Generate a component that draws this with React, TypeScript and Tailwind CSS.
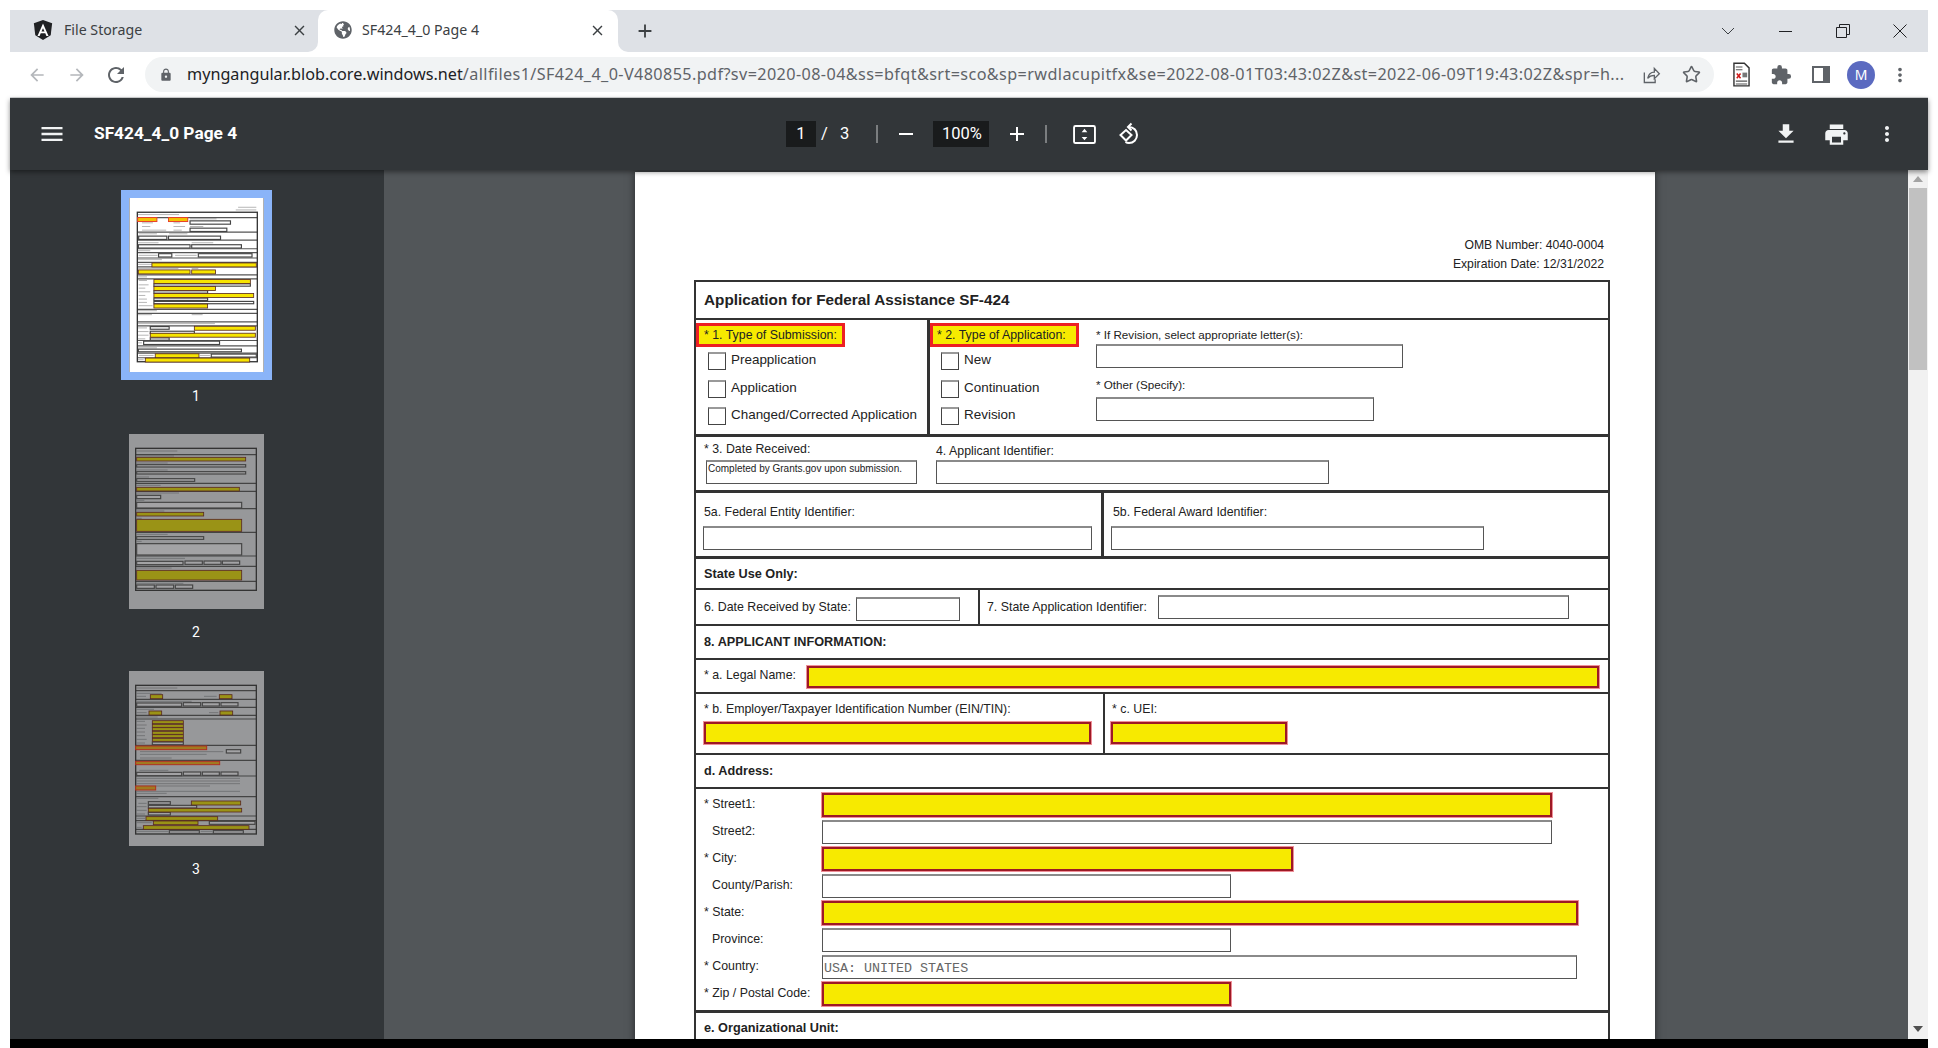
import { MdArrowBack, MdArrowForward, MdExtension, MdFileDownload, MdLock, MdMenu, MdMoreVert, MdPrint, MdRefresh, MdClose, MdAdd, MdRemove } from "react-icons/md";
import { FaGlobeAmericas } from "react-icons/fa";
import { Star } from "lucide-react";

const inputBox = "border border-[#555] border-t-2 border-t-[#8a8a8a] bg-white shrink-0";
const yellowBox = "border-2 border-[#9c1a26] bg-[#f7ea00] shadow-[0_0_0_1px_#ee8f98] shrink-0";

type Bar = [number, number, number, number];
type Label = [number, number, number];

function Thumb({ y, bg, yellow, lines, frame, gray, bars, reds, labels, active }: { y: number; bg: string; yellow: string; lines: number[]; frame: number[]; gray: Bar[]; bars: Bar[]; reds?: Bar[]; labels: Label[]; active?: boolean }) {
  return (
    <svg viewBox={`87 ${y} 405 525`} className="w-full h-full block">
      <rect x="87" y={y} width="405" height="525" fill={bg} />
      {labels.map((t, i) => (
        <line key={i} x1={t[0]} x2={t[1]} y1={t[2]} y2={t[2]} stroke={active ? "#b5b5b5" : "#747577"} strokeWidth="3" />
      ))}
      {lines.map((l) => (
        <line key={l} x1={frame[0]} x2={frame[2]} y1={l} y2={l} stroke={active ? "#555" : "#444"} strokeWidth="3.5" />
      ))}
      <rect x={frame[0]} y={frame[1]} width={frame[2] - frame[0]} height={frame[3] - frame[1]} fill="none" stroke="#333" strokeWidth="4" />
      {gray.map((b, i) => (
        <rect key={i} x={b[0]} y={b[2]} width={b[1] - b[0]} height={b[3]} fill={active ? "#fff" : "#a3a3a5"} stroke="#444" strokeWidth="3.5" />
      ))}
      {bars.map((b, i) => (
        <rect key={i} x={b[0]} y={b[2] - 1} width={b[1] - b[0]} height={b[3] + 3} fill={yellow} stroke="#5a2a22" strokeWidth="2.5" />
      ))}
      {(reds || []).map((b, i) => (
        <rect key={i} x={b[0]} y={b[2] - 1} width={b[1] - b[0]} height={b[3] + 2} fill={active ? "#f2c400" : "#a07a20"} stroke={active ? "#e8402a" : "#b03020"} strokeWidth="3" />
      ))}
    </svg>
  );
}

function Sidebar() {
  return (
    <div className="w-[374px] shrink-0 bg-[#323639] flex flex-col items-center">
      <div className="mt-[20px] ml-[-2px] w-[151px] h-[190px] border-[8px] border-[#8ab4f8]">
        <Thumb
          y={84}
          active
          bg="#fff"
          yellow="#f7e400"
          frame={[111, 127, 473, 578]}
          lines={[143, 187, 211, 237, 249, 265, 278, 292, 316, 328, 420, 432, 458, 470, 514, 530, 552, 566]}
          labels={[[415, 470, 112], [408, 470, 120], [113, 237, 134], [270, 350, 147], [270, 310, 170], [125, 158, 159], [125, 150, 170], [125, 198, 181], [220, 240, 159], [220, 255, 170], [220, 245, 181], [115, 170, 192], [207, 262, 192], [113, 175, 219], [275, 340, 219], [113, 150, 243], [115, 172, 257], [225, 290, 257], [113, 185, 270], [113, 155, 284], [113, 235, 297], [275, 295, 297], [113, 140, 322], [115, 140, 333], [115, 145, 346], [115, 135, 356], [115, 150, 367], [115, 135, 378], [115, 140, 389], [115, 140, 399], [115, 157, 409], [113, 170, 424], [113, 155, 436], [275, 308, 436], [113, 345, 463], [113, 140, 476], [113, 145, 487], [113, 145, 498], [113, 135, 509], [113, 125, 521], [113, 170, 536], [116, 160, 559], [300, 330, 559], [113, 130, 572]]}
          gray={[[270, 392, 153, 10], [270, 381, 175, 10], [115, 200, 199, 10], [205, 362, 199, 10], [114, 270, 225, 10], [275, 425, 225, 10], [175, 215, 252, 10], [295, 457, 252, 10], [161, 452, 343, 7], [161, 323, 364, 7], [161, 323, 386, 7], [161, 462, 396, 7], [150, 207, 472, 8], [150, 283, 486, 7], [150, 207, 506, 7], [130, 359, 516, 10], [114, 425, 540, 8], [334, 470, 555, 9]]}
          bars={[[155, 470, 281, 9], [114, 270, 302, 9], [275, 347, 302, 9], [161, 452, 331, 9], [161, 347, 352, 9], [161, 462, 373, 9], [161, 323, 405, 9], [283, 467, 472, 9], [150, 467, 493, 9], [165, 297, 555, 9], [135, 450, 568, 9]]}
          reds={[[112, 170, 144, 10], [205, 263, 144, 10]]}
        />
      </div>
      <div className="mt-[2px] ml-[-2px] h-[28px] leading-[28px] text-[14px] text-white font-['Roboto',sans-serif]">1</div>
      <div className="mt-[24px] ml-[-2px] w-[135px] h-[175px]">
        <Thumb
          y={42}
          bg="#97989a"
          yellow="#9a9316"
          frame={[107, 85, 469, 511]}
          lines={[104, 190, 214, 266, 337, 408, 439, 484]}
          labels={[[110, 232, 93], [110, 222, 108], [110, 203, 129], [110, 203, 150], [110, 147, 171], [110, 182, 196], [110, 237, 219], [110, 133, 241], [110, 193, 273], [110, 125, 295], [110, 203, 343], [110, 125, 364], [110, 255, 415], [110, 215, 444], [110, 250, 490]]}
          gray={[[110, 437, 134, 7], [110, 437, 155, 7], [110, 284, 176, 8], [110, 182, 226, 10], [110, 425, 247, 17], [110, 311, 350, 8], [110, 425, 371, 34], [110, 249, 424, 10], [255, 307, 423, 10], [312, 363, 423, 10], [367, 419, 423, 10], [110, 163, 495, 10], [168, 221, 495, 10], [226, 278, 495, 10]]}
          bars={[[110, 437, 113, 8], [110, 418, 203, 8], [110, 311, 278, 8], [110, 425, 299, 33], [110, 425, 452, 26]]}
        />
      </div>
      <div className="mt-[9px] ml-[-2px] h-[28px] leading-[28px] text-[14px] text-white font-['Roboto',sans-serif]">2</div>
      <div className="mt-[25px] ml-[-2px] w-[135px] h-[175px]">
        <Thumb
          y={753}
          bg="#97989a"
          yellow="#9a9316"
          frame={[107, 796, 469, 1242]}
          lines={[812, 838, 862, 886, 897, 976, 1021, 1068, 1130, 1188, 1202, 1228]}
          labels={[[110, 232, 804], [110, 185, 820], [110, 138, 829], [312, 350, 829], [110, 275, 844], [110, 162, 868], [110, 140, 878], [327, 355, 878], [110, 173, 891], [110, 135, 904], [110, 140, 915], [110, 135, 925], [110, 135, 936], [110, 135, 947], [110, 140, 958], [110, 135, 969], [120, 370, 995], [120, 320, 1003], [120, 215, 1014], [118, 205, 1051], [110, 420, 1075], [110, 420, 1083], [110, 420, 1091], [110, 330, 1098], [110, 420, 1114], [110, 200, 1120], [110, 175, 1135], [115, 140, 1150], [110, 140, 1160], [110, 140, 1171], [110, 135, 1182], [110, 135, 1195], [110, 155, 1208], [110, 125, 1222], [110, 205, 1234], [302, 337, 1234]]}
          gray={[[110, 245, 849, 10], [250, 302, 848, 10], [307, 358, 848, 10], [363, 414, 848, 10], [157, 250, 966, 8], [379, 422, 989, 10], [110, 245, 1057, 10], [250, 302, 1056, 10], [307, 358, 1056, 10], [363, 414, 1056, 10], [145, 211, 1145, 8], [145, 290, 1156, 8], [145, 211, 1177, 8], [328, 465, 1204, 9], [208, 298, 1232, 8], [340, 430, 1232, 8]]}
          bars={[[151, 188, 825, 9], [358, 396, 825, 9], [147, 185, 874, 9], [360, 398, 874, 9], [157, 250, 903, 6], [157, 250, 914, 6], [157, 250, 924, 6], [157, 250, 935, 6], [157, 250, 945, 6], [157, 250, 956, 6], [274, 422, 1144, 9], [145, 425, 1166, 8], [138, 353, 1191, 8], [160, 294, 1204, 8], [130, 447, 1218, 8]]}
          reds={[[107, 320, 979, 9], [107, 359, 1025, 8], [107, 167, 1099, 10]]}
        />
      </div>
      <div className="mt-[9px] ml-[-2px] h-[28px] leading-[28px] text-[14px] text-white font-['Roboto',sans-serif]">3</div>
    </div>
  );
}

function Check({ label }: { label: string }) {
  return (
    <div className="flex items-start h-[27.5px]">
      <div className="w-[18px] h-[18px] border border-[#444] border-t-2 border-t-[#999] bg-white shrink-0" />
      <span className="ml-[5px] mt-[-1px] leading-[18px] text-[13.45px] whitespace-nowrap">{label}</span>
    </div>
  );
}

function AddressRow({ label, width, yellow, indent, value }: { label: string; width: string; yellow?: boolean; indent?: boolean; value?: string }) {
  return (
    <div className="flex h-[24px]">
      <span className={"w-[118px] shrink-0 mt-[3px] " + (indent ? "pl-[8px]" : "")}>{label}</span>
      <div className={(yellow ? yellowBox : inputBox) + " h-[24px] " + width}>
        {value && <div className="pl-[1px] pt-[4px] font-['Liberation_Mono',monospace] text-[13.35px] leading-[16px] text-[#666]">{value}</div>}
      </div>
    </div>
  );
}

function PdfForm() {
  return (
    <div className="w-[916px] mt-[6px] border-x-2 border-t-2 border-[#333] text-[12.35px] leading-[16px] text-[#222]">
      <div className="h-[36px] flex items-center pl-[8px] text-[15.3px] font-bold">Application for Federal Assistance SF-424</div>

      <div className="h-[116px] border-t-2 border-[#333] flex">
        <div className="w-[234px] border-r-[3px] border-[#333] shrink-0">
          <div className="w-[149px] h-[24px] mt-[3px] border-[3px] border-[#ed2024] bg-[#f7ea00] pl-[5px] leading-[18px]">* 1. Type of Submission:</div>
          <div className="ml-[12px] mt-[5px]">
            <Check label="Preapplication" />
            <Check label="Application" />
            <Check label="Changed/Corrected Application" />
          </div>
        </div>
        <div className="w-[166px] shrink-0">
          <div className="w-[149px] h-[24px] mt-[3px] border-[3px] border-[#ed2024] bg-[#f7ea00] pl-[4px] leading-[18px]">* 2. Type of Application:</div>
          <div className="ml-[11px] mt-[5px]">
            <Check label="New" />
            <Check label="Continuation" />
            <Check label="Revision" />
          </div>
        </div>
        <div className="flex flex-col">
          <div className="mt-[7px] text-[11.65px]">* If Revision, select appropriate letter(s):</div>
          <div className={inputBox + " w-[307px] h-[24px] mt-[1px]"} />
          <div className="mt-[9px] text-[11.65px]">* Other (Specify):</div>
          <div className={inputBox + " w-[278px] h-[24px] mt-[4px]"} />
        </div>
      </div>

      <div className="h-[56px] border-t-[3px] border-[#333] flex">
        <div className="w-[240px] shrink-0 pl-[8px] pt-[4px]">
          <div>* 3. Date Received:</div>
          <div className={inputBox + " w-[211px] h-[24px] ml-[2px] mt-[3px] pl-[1px] text-[10px] leading-[14px]"}>Completed by Grants.gov upon submission.</div>
        </div>
        <div className="pt-[6px]">
          <div>4. Applicant Identifier:</div>
          <div className={inputBox + " w-[393px] h-[24px] mt-[1px]"} />
        </div>
      </div>

      <div className="h-[66px] border-t-[3px] border-[#333] flex">
        <div className="w-[408px] shrink-0 border-r-[3px] border-[#333] pl-[7px] pt-[11px]">
          <div className="pl-[1px]">5a. Federal Entity Identifier:</div>
          <div className={inputBox + " w-[389px] h-[24px] mt-[6px]"} />
        </div>
        <div className="pl-[7px] pt-[11px]">
          <div className="pl-[2px]">5b. Federal Award Identifier:</div>
          <div className={inputBox + " w-[373px] h-[24px] mt-[6px]"} />
        </div>
      </div>

      <div className="h-[32px] border-t-[3px] border-[#333] flex items-center pl-[8px] font-bold text-[12.7px]">State Use Only:</div>

      <div className="h-[36px] border-t-2 border-[#333] flex">
        <div className="w-[284px] shrink-0 border-r-2 border-[#333] pl-[8px] flex items-start">
          <span className="mt-[9px]">6. Date Received by State:</span>
          <div className={inputBox + " w-[104px] h-[24px] mt-[7px] ml-[5px]"} />
        </div>
        <div className="pl-[7px] flex items-start">
          <span className="mt-[9px]">7. State Application Identifier:</span>
          <div className={inputBox + " w-[411px] h-[24px] mt-[5px] ml-[11px]"} />
        </div>
      </div>

      <div className="h-[34px] border-t-2 border-[#333] flex items-center pl-[8px] font-bold text-[12.7px]">8. APPLICANT INFORMATION:</div>

      <div className="h-[34px] border-t-2 border-[#333] flex pl-[8px]">
        <span className="mt-[7px] w-[103px] shrink-0">* a. Legal Name:</span>
        <div className={yellowBox + " w-[792px] h-[22px] mt-[6px]"} />
      </div>

      <div className="h-[61px] border-t-2 border-[#333] flex">
        <div className="w-[409px] shrink-0 border-r-2 border-[#333] pl-[8px] pt-[7px]">
          <div>* b. Employer/Taxpayer Identification Number (EIN/TIN):</div>
          <div className={yellowBox + " w-[387px] h-[22px] mt-[5px]"} />
        </div>
        <div className="pl-[6px] pt-[7px]">
          <div className="pl-[1px]">* c. UEI:</div>
          <div className={yellowBox + " w-[176px] h-[22px] mt-[5px]"} />
        </div>
      </div>

      <div className="h-[34px] border-t-2 border-[#333] flex items-center pl-[8px] font-bold text-[12.7px]">d. Address:</div>

      <div className="h-[223px] border-t-2 border-[#333] pl-[8px] pt-[4px] flex flex-col gap-[3px]">
        <AddressRow label="* Street1:" width="w-[730px]" yellow />
        <AddressRow label="Street2:" indent width="w-[730px]" />
        <AddressRow label="* City:" width="w-[471px]" yellow />
        <AddressRow label="County/Parish:" indent width="w-[409px]" />
        <AddressRow label="* State:" width="w-[756px]" yellow />
        <AddressRow label="Province:" indent width="w-[409px]" />
        <AddressRow label="* Country:" width="w-[755px]" value="USA: UNITED STATES" />
        <AddressRow label="* Zip / Postal Code:" width="w-[409px]" yellow />
      </div>

      <div className="h-[34px] border-t-[3px] border-[#333] flex items-center pl-[8px] pb-[2px] font-bold text-[12.7px]">e. Organizational Unit:</div>
    </div>
  );
}

export default function App() {
  return (
    <div className="w-[1938px] h-[1048px] overflow-hidden bg-white px-[10px] pt-[10px] flex flex-col font-['Liberation_Sans',Arial,sans-serif]">
      {/* tabs */}
      <div className="h-[42px] flex shrink-0 font-['Noto_Sans',sans-serif] text-[14.2px] text-[#3c4043]">
        <div className="w-[308px] bg-[#dee1e6] rounded-br-[10px] flex items-center pl-[22px] pr-[10px] pb-[2px]">
          <svg viewBox="0 0 24 24" className="w-[22px] h-[22px] shrink-0">
            <path d="M12 1 2 4.6l1.6 13L12 23l8.4-5.4 1.6-13z" fill="#202124" />
            <path d="M12 5 6 18.5h2.3l1.2-3h5l1.2 3H18zM12 10l1.7 3.7h-3.4z" fill="#fff" fillRule="evenodd" />
          </svg>
          <span className="ml-[10px] flex-1">File Storage</span>
          <MdClose className="w-[17px] h-[17px] text-[#3c4043]" />
        </div>
        <div className="w-[300px] bg-[#dee1e6]">
          <div className="h-full bg-white rounded-t-[10px] flex items-center pl-[16px] pr-[12px] pb-[2px]">
            <FaGlobeAmericas className="w-[18px] h-[18px] text-[#5f6368] shrink-0" />
            <span className="ml-[10px] flex-1">SF424_4_0 Page 4</span>
            <MdClose className="w-[17px] h-[17px] text-[#3c4043]" />
          </div>
        </div>
        <div className="flex-1 bg-[#dee1e6] rounded-bl-[10px] flex items-center pl-[16px] text-[#3c4043]">
          <MdAdd className="w-[22px] h-[22px]" />
          <div className="flex-1" />
          <svg viewBox="0 0 14 8" className="w-[14px] h-[8px] mr-[44px]"><path d="M1 1l6 6 6-6" fill="none" stroke="#3c4043" strokeWidth="1" /></svg>
          <div className="w-[13px] h-[1px] bg-[#202124] mr-[44px]" />
          <svg viewBox="0 0 14 14" className="w-[14px] h-[14px] mr-[43px]"><path d="M.5 3.5h10v10H.5zM3.5 3.5v-3h10v10h-3" fill="none" stroke="#202124" /></svg>
          <svg viewBox="0 0 14 14" className="w-[14px] h-[14px] mr-[21px]"><path d="M.5.5l13 13M13.500.5l-13 13" fill="none" stroke="#202124" /></svg>
        </div>
      </div>
      {/* browser toolbar */}
      <div className="h-[46px] shrink-0 bg-white border-b border-[#d4d6d8] flex items-center text-[#5f6368]">
        <MdArrowBack className="w-[20px] h-[20px] ml-[17px] text-[#b4b7bb]" />
        <MdArrowForward className="w-[20px] h-[20px] ml-[20px] text-[#b4b7bb]" />
        <MdRefresh className="w-[24px] h-[24px] ml-[17px]" />
        <div className="ml-[17px] w-[1569px] h-[35px] rounded-full bg-[#f1f3f4] flex items-center shrink-0">
          <MdLock className="w-[14px] h-[14px] ml-[14px] shrink-0" />
          <div className="ml-[14px] w-[1441px] whitespace-nowrap overflow-hidden font-['Noto_Sans',sans-serif] text-[16.2px]">
            <span className="text-[#202124]">myngangular.blob.core.windows.net</span>
            <span className="tracking-[0.4px]">/allfiles1/SF424_4_0-V480855.pdf?sv=2020-08-04&amp;ss=bfqt&amp;srt=sco&amp;sp=rwdlacupitfx&amp;se=2022-08-01T03:43:02Z&amp;st=2022-06-09T19:43:02Z&amp;spr=h...</span>
          </div>
          <svg viewBox="0 0 24 24" className="w-[20px] h-[20px] ml-[13px] shrink-0" fill="none" stroke="#5f6368" strokeWidth="1.6">
            <path d="M4 9v12h13v-4M8 16c1-5 4-7.500 8-7.500V4l6 6.500-6 6v-4c-3 0-6 1-8 3.500z" />
          </svg>
          <Star className="w-[19px] h-[19px] ml-[21px] shrink-0" strokeWidth={2} />
        </div>
        <svg viewBox="0 0 18 26" className="w-[17px] h-[25px] ml-[19px] shrink-0">
          <path d="M1 1h11l5 5v19H1z" fill="#fff" stroke="#333" strokeWidth="1.5" />
          <path d="M3 5h7M3 8h7M3 20h12M3 23h12" stroke="#555" strokeWidth="1.2" />
          <path d="M4 12l4 5M8 12l-4 5" stroke="#d01818" strokeWidth="1.6" />
          <path d="M10 11h5v5h-5z" fill="#777" />
        </svg>
        <MdExtension className="w-[22px] h-[22px] ml-[20px] text-[#5f6368] shrink-0" />
        <div className="w-[18px] h-[17px] ml-[20px] bg-[#5f6368] p-[2px] pr-[7px] shrink-0"><div className="w-full h-full bg-white" /></div>
        <div className="w-[28px] h-[28px] ml-[17px] rounded-full bg-[#5b6ac0] text-white text-[14px] flex items-center justify-center font-['Noto_Sans',sans-serif] shrink-0">M</div>
        <MdMoreVert className="w-[22px] h-[22px] ml-[14px] shrink-0" />
      </div>
      {/* pdf viewer toolbar */}
      <div className="h-[72px] shrink-0 bg-[#323639] shadow-[0_2px_5px_rgba(0,0,0,0.45)] relative z-10 flex items-center text-white font-['Roboto',sans-serif]">
        <MdMenu className="w-[28px] h-[28px] ml-[28px] shrink-0 text-[#f1f3f4]" />
        <span className="ml-[28px] w-[692px] text-[17.3px] font-bold shrink-0">SF424_4_0 Page 4</span>
        <div className="w-[30px] h-[26px] bg-[#191b1c] flex items-center justify-center text-[16.5px]">1</div>
        <span className="ml-[5px] w-[10px] text-[16.5px]">/</span>
        <span className="ml-[9px] w-[18px] text-[16.5px]">3</span>
        <div className="ml-[18px] w-[2px] h-[18px] bg-[#7b7e80]" />
        <MdRemove className="w-[24px] h-[24px] ml-[16px]" />
        <div className="ml-[15px] w-[56px] h-[26px] bg-[#191b1c] flex items-center justify-center text-[16.5px] pl-[2px]">100%</div>
        <MdAdd className="w-[24px] h-[24px] ml-[16px]" />
        <div className="ml-[16px] w-[2px] h-[18px] bg-[#7b7e80]" />
        <svg viewBox="0 0 24 20" className="w-[23px] h-[19px] ml-[26px] shrink-0">
          <rect x="1" y="1" width="22" height="18" rx="1.500" fill="none" stroke="#fff" strokeWidth="2" />
          <path d="M12 4l3 3.500H9zM12 16l-3-3.500h6z" fill="#fff" />
        </svg>
        <svg viewBox="0 0 24 24" className="w-[24px] h-[24px] ml-[21px] shrink-0" fill="none" stroke="#fff" strokeWidth="2">
          <path d="M9 8l5.500 5L9 18.500 3.500 13z" />
          <path d="M12 5c4.500 0 8 3.500 8 8s-3.500 8-8 8c-1.500 0-2.500-.3-3.500-1" />
          <path d="M14.500 1.500L11 5l3.500 3.500" />
        </svg>
        <div className="flex-1" />
        <MdFileDownload className="w-[26px] h-[26px] text-[#f1f3f4] shrink-0" />
        <MdPrint className="w-[27px] h-[27px] ml-[24px] text-[#f1f3f4] shrink-0" />
        <MdMoreVert className="w-[24px] h-[24px] ml-[25px] mr-[29px] text-[#f1f3f4] shrink-0" />
      </div>
      {/* content */}
      <div className="h-[869px] shrink-0 flex overflow-hidden">
        <Sidebar />
        <div className="flex-1 bg-[#525659] flex justify-center overflow-hidden">
          <div className="w-[1020px] h-[1200px] mt-[2px] ml-[-2px] bg-white shadow-[0_0_8px_rgba(0,0,0,0.55)] pl-[59px] pt-[64px]">
            <div className="w-[910px] text-right text-[12.2px] leading-[19px] text-[#222]">
              <div>OMB Number: 4040-0004</div>
              <div>Expiration Date: 12/31/2022</div>
            </div>
            <PdfForm />
          </div>
        </div>
        <div className="w-[20px] shrink-0 bg-[#f1f1f1] flex flex-col items-center">
          <svg viewBox="0 0 10 6" className="w-[10px] h-[6px] mt-[6px]"><path d="M5 0l5 6H0z" fill="#a3a3a3" /></svg>
          <div className="w-[18px] h-[182px] mt-[6px] bg-[#c1c1c1]" />
          <div className="flex-1" />
          <svg viewBox="0 0 10 6" className="w-[10px] h-[6px] mb-[7px]"><path d="M5 6L10 0H0z" fill="#505050" /></svg>
        </div>
      </div>
      <div className="flex-1 bg-black" />
    </div>
  );
}
